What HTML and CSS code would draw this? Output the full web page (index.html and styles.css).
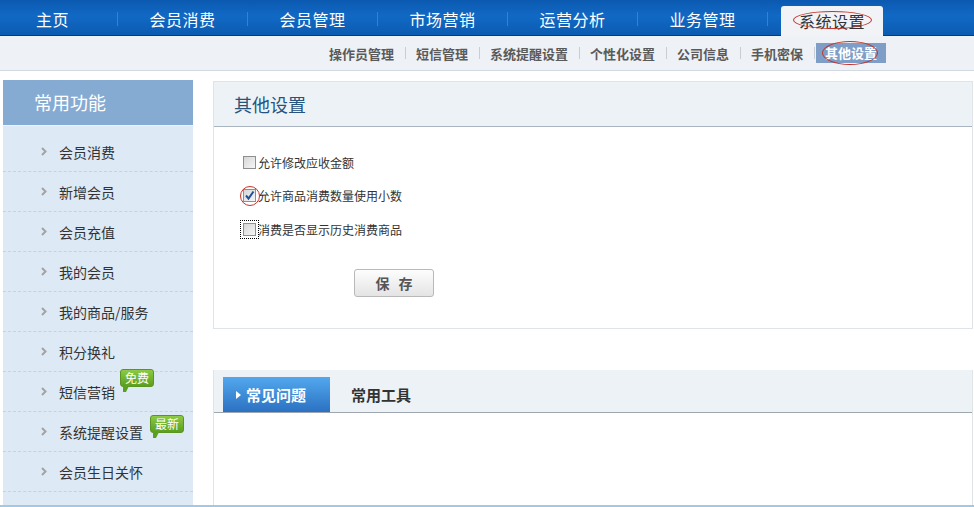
FILE: index.html
```html
<!DOCTYPE html>
<html lang="zh-CN">
<head>
    <meta charset="UTF-8">
    <title>系统设置 - 其他设置</title>
    <link rel="stylesheet" href="styles.css">
</head>
<body>
    <div class="topnav">
        <a class="nav-item nav-first">主页</a>
        <span class="nav-sep"></span>
        <a class="nav-item">会员消费</a>
        <span class="nav-sep"></span>
        <a class="nav-item">会员管理</a>
        <span class="nav-sep"></span>
        <a class="nav-item">市场营销</a>
        <span class="nav-sep"></span>
        <a class="nav-item">运营分析</a>
        <span class="nav-sep"></span>
        <a class="nav-item">业务管理</a>
        <span class="nav-sep"></span>
        <a class="nav-item nav-active"><span class="mark mark-tab"></span>系统设置</a>
    </div>

    <div class="subnav">
        <a class="sub-item">操作员管理</a>
        <span class="sub-sep"></span>
        <a class="sub-item">短信管理</a>
        <span class="sub-sep"></span>
        <a class="sub-item">系统提醒设置</a>
        <span class="sub-sep"></span>
        <a class="sub-item">个性化设置</a>
        <span class="sub-sep"></span>
        <a class="sub-item">公司信息</a>
        <span class="sub-sep"></span>
        <a class="sub-item">手机密保</a>
        <span class="sub-sep"></span>
        <a class="sub-item sub-active"><span class="mark mark-sub"></span>其他设置</a>
    </div>

    <div class="main">
        <div class="sidebar">
            <div class="side-title">常用功能</div>
            <ul class="side-list">
                <li><svg class="chev" width="6" height="9" viewBox="0 0 6 9"><path d="M1 1l3.5 3.5L1 8" fill="none" stroke="#a3a3a3" stroke-width="2"/></svg><span class="side-text">会员消费</span></li>
                <li><svg class="chev" width="6" height="9" viewBox="0 0 6 9"><path d="M1 1l3.5 3.5L1 8" fill="none" stroke="#a3a3a3" stroke-width="2"/></svg><span class="side-text">新增会员</span></li>
                <li><svg class="chev" width="6" height="9" viewBox="0 0 6 9"><path d="M1 1l3.5 3.5L1 8" fill="none" stroke="#a3a3a3" stroke-width="2"/></svg><span class="side-text">会员充值</span></li>
                <li><svg class="chev" width="6" height="9" viewBox="0 0 6 9"><path d="M1 1l3.5 3.5L1 8" fill="none" stroke="#a3a3a3" stroke-width="2"/></svg><span class="side-text">我的会员</span></li>
                <li><svg class="chev" width="6" height="9" viewBox="0 0 6 9"><path d="M1 1l3.5 3.5L1 8" fill="none" stroke="#a3a3a3" stroke-width="2"/></svg><span class="side-text">我的商品/服务</span></li>
                <li><svg class="chev" width="6" height="9" viewBox="0 0 6 9"><path d="M1 1l3.5 3.5L1 8" fill="none" stroke="#a3a3a3" stroke-width="2"/></svg><span class="side-text">积分换礼</span></li>
                <li><svg class="chev" width="6" height="9" viewBox="0 0 6 9"><path d="M1 1l3.5 3.5L1 8" fill="none" stroke="#a3a3a3" stroke-width="2"/></svg><span class="side-text">短信营销<span class="badge badge-free">免费</span></span></li>
                <li><svg class="chev" width="6" height="9" viewBox="0 0 6 9"><path d="M1 1l3.5 3.5L1 8" fill="none" stroke="#a3a3a3" stroke-width="2"/></svg><span class="side-text">系统提醒设置<span class="badge badge-new">最新</span></span></li>
                <li><svg class="chev" width="6" height="9" viewBox="0 0 6 9"><path d="M1 1l3.5 3.5L1 8" fill="none" stroke="#a3a3a3" stroke-width="2"/></svg><span class="side-text">会员生日关怀</span></li>
            </ul>
        </div>

        <div class="content">
            <div class="panel panel-settings">
                <div class="panel-head">其他设置</div>
                <div class="panel-body">
                    <label class="check-row">
                        <span class="box"></span>允许修改应收金额
                    </label>
                    <label class="check-row">
                        <span class="box checked"><span class="mark mark-box"></span><svg width="11" height="11" viewBox="0 0 11 11"><path d="M2 5.5l2.5 3L9.5 1.5" fill="none" stroke="#1d4f9c" stroke-width="2"/></svg></span>允许商品消费数量使用小数
                    </label>
                    <label class="check-row">
                        <span class="box focused"></span>消费是否显示历史消费商品
                    </label>
                    <button class="save-btn">保 存</button>
                </div>
            </div>

            <div class="panel panel-help">
                <div class="tabs">
                    <a class="tab tab-active"><svg width="5" height="8" viewBox="0 0 5 8"><path d="M0 0l5 4-5 4z" fill="#fff"/></svg>常见问题</a>
                    <a class="tab">常用工具</a>
                </div>
                <div class="tab-body"></div>
            </div>
        </div>
    </div>
    <div class="footer-line"></div>
</body>
</html>
```

FILE: styles.css
```css
body {
    margin: 0;
    font-family: "Noto Sans CJK SC", "Noto Sans", sans-serif;
    background: #fff;
    color: #333;
}

a {
    cursor: pointer;
}

/* top navigation */
.topnav {
    display: flex;
    align-items: stretch;
    height: 35px;
    margin-left: -12px;
    background: linear-gradient(#0b59b0, #1169c4 45%, #0c5bb1);
    border-bottom: 1px solid #073c7a;
}

.nav-item {
    width: 129px;
    display: flex;
    align-items: center;
    justify-content: center;
    padding-top: 3px;
    box-sizing: border-box;
    color: #fff;
    font-size: 16px;
    letter-spacing: 0.5px;
}

.nav-sep {
    width: 1px;
    height: 14px;
    margin-top: 2px;
    align-self: center;
    background: #3d7fc9;
}

.nav-active {
    position: relative;
    width: 102px;
    margin: 6px 0 -1px 13px;
    padding-top: 0;
    background: #f1f3f6;
    color: #333;
    border-radius: 3px 3px 0 0;
}

/* sub navigation */
.subnav {
    display: flex;
    align-items: center;
    height: 34px;
    padding-left: 329px;
    background: #eef1f5;
    border-bottom: 1px solid #d3d9e0;
}

.sub-item {
    position: relative;
    font-size: 13px;
    font-weight: bold;
    color: #5a5a5a;
}

.sub-sep {
    width: 1px;
    height: 12px;
    margin: 0 10.5px;
    background: #c9ced6;
}

.sub-active {
    margin-left: -9px;
    padding: 0 9px;
    line-height: 20px;
    background: #7e9ec8;
    color: #fff;
}

/* red hand-drawn marks */
.mark {
    position: absolute;
    border: 1px solid #c4342c;
    border-radius: 50%;
    pointer-events: none;
}

.mark-tab {
    left: 12px;
    right: 11px;
    top: 5px;
    bottom: 7px;
}

.mark-sub {
    left: 6px;
    right: 8px;
    top: -2px;
    bottom: -2px;
}

.mark-box {
    left: -4px;
    top: -4px;
    width: 18px;
    height: 18px;
}

/* layout */
.main {
    display: flex;
    height: 434px;
    box-sizing: border-box;
    padding-top: 9px;
}

.sidebar {
    width: 190px;
    margin-left: 3px;
    display: flex;
    flex-direction: column;
    background: #dde9f4;
}

.side-title {
    height: 45px;
    line-height: 45px;
    padding-left: 31px;
    font-size: 18px;
    color: #fff;
    background: #86abd3;
    border-bottom: 1px solid #eef4fa;
}

.side-list {
    list-style: none;
    margin: 0;
    padding: 6px 0 0;
}

.side-list li {
    display: flex;
    align-items: center;
    height: 39px;
    padding-left: 38px;
    border-bottom: 1px dashed #c6d3df;
    font-size: 14px;
}

.chev {
    margin-right: 12px;
}

.side-text {
    position: relative;
}

.badge {
    position: absolute;
    left: 100%;
    padding: 0 4px;
    line-height: 16px;
    font-size: 12px;
    color: #fff;
    white-space: nowrap;
    background: linear-gradient(#8ccb43, #5a9f1f);
    border: 1px solid #5b9424;
    border-radius: 3px;
}

.badge::after {
    content: "";
    position: absolute;
    left: 2px;
    bottom: -6px;
    border-left: 3px solid #5a9f1f;
    border-right: 3px solid transparent;
    border-top: 6px solid #5a9f1f;
}

.badge-free {
    margin-left: 5px;
    top: -13px;
}

.badge-new {
    margin-left: 7px;
    top: -7px;
}

.content {
    width: 760px;
    margin-left: 20px;
    margin-top: 1px;
    display: flex;
    flex-direction: column;
}

/* settings panel */
.panel {
    border: 1px solid #dfe4e9;
}

.panel-head {
    height: 44px;
    line-height: 44px;
    padding-left: 20px;
    font-size: 18px;
    color: #27537f;
    background: #edf2f7;
    border-bottom: 1px solid #a9b4c0;
}

.panel-body {
    height: 201px;
    box-sizing: border-box;
    padding: 25px 0 0 29px;
    font-size: 12px;
}

.check-row {
    display: flex;
    align-items: center;
    height: 20px;
    margin-bottom: 13.5px;
}

.box {
    position: relative;
    width: 11px;
    height: 11px;
    margin-right: 2px;
    border: 1px solid #8e8f8f;
    background: linear-gradient(135deg, #d6d6d6, #f6f6f6);
    display: flex;
    align-items: center;
    justify-content: center;
}

.focused {
    outline: 1px dotted #000;
    outline-offset: 2px;
}

.save-btn {
    display: block;
    width: 80px;
    height: 28px;
    margin: 30px 0 0 111px;
    padding: 0;
    font-family: inherit;
    font-size: 14px;
    font-weight: bold;
    color: #555;
    letter-spacing: 3px;
    text-indent: 3px;
    background: linear-gradient(#fdfdfd, #e4e4e4);
    border: 1px solid #b9b9b9;
    border-radius: 3px;
    cursor: pointer;
}

/* help panel */
.panel-help {
    flex: 1;
    margin-top: 41px;
    border-top: none;
    border-bottom: none;
    display: flex;
    flex-direction: column;
}

.tabs {
    display: flex;
    align-items: flex-end;
    height: 42px;
    padding-left: 9px;
    background: #edf2f7;
    border-bottom: 1px solid #9ea7b1;
}

.tab {
    height: 35px;
    display: flex;
    align-items: center;
    padding: 0 21px;
    font-size: 15px;
    font-weight: bold;
    color: #333;
}

.tab-active {
    width: 107px;
    box-sizing: border-box;
    padding: 0 0 0 13px;
    color: #fff;
    background: linear-gradient(#52a8ee, #2b71c2);
}

.tab-active svg {
    margin-right: 5px;
}

.tab-body {
    flex: 1;
}

.footer-line {
    height: 2px;
    background: #a3c8e3;
}
```
